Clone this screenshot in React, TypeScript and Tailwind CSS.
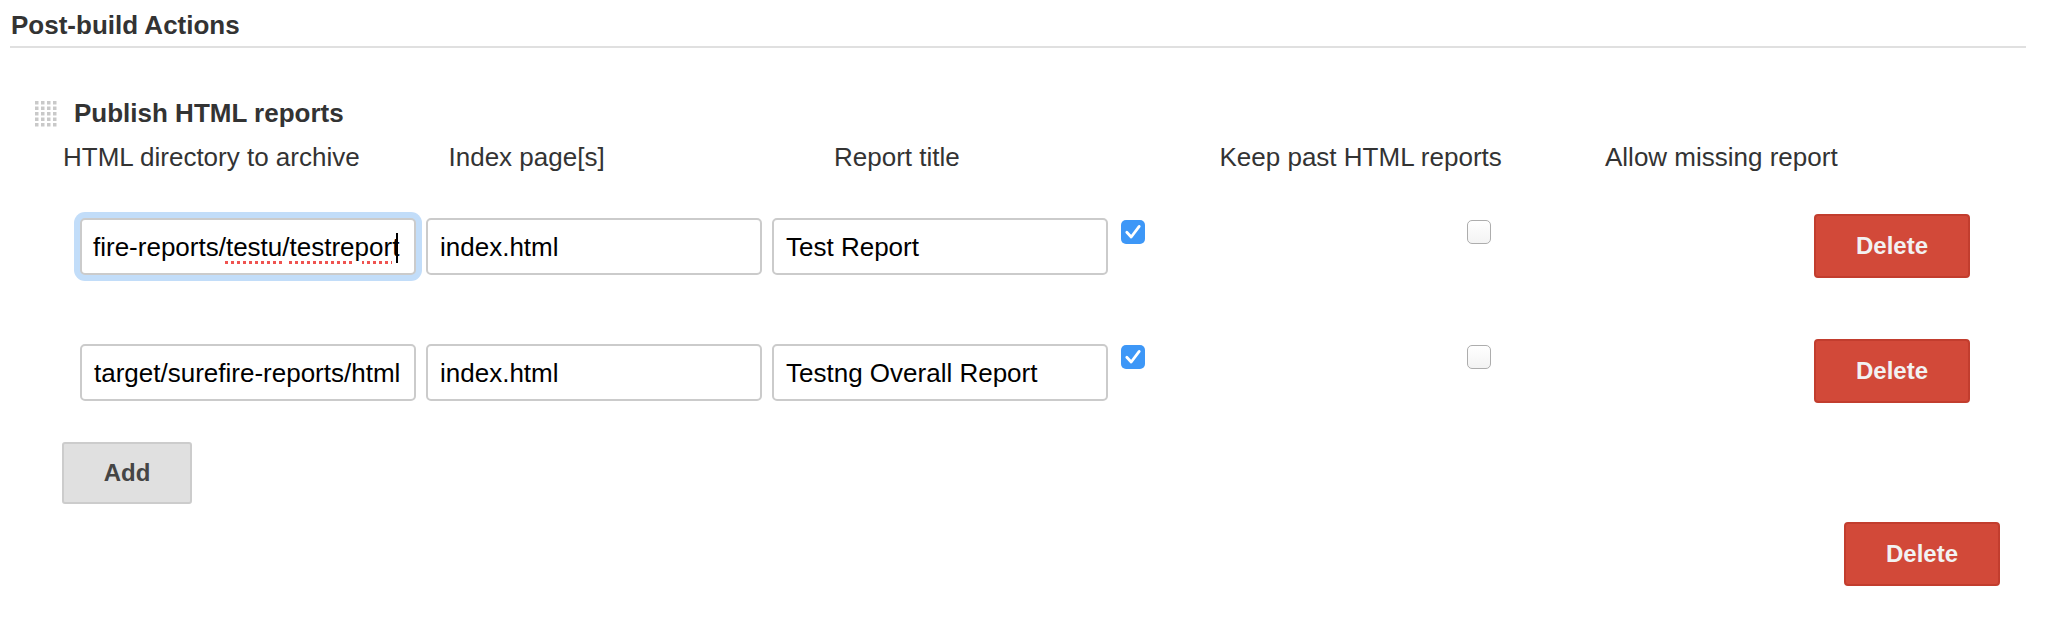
import React from "react";

function Field({ children, focused }: { children: React.ReactNode; focused?: boolean }) {
  return (
    <div
      className={
        focused
          ? "flex h-[57px] w-[336px] items-center overflow-hidden whitespace-nowrap rounded-[5px] border-2 border-[#cbcbcb] bg-white pl-[11px] pt-[2px] text-[26px] text-black shadow-[0_0_0_6px_#c2ddf9]"
          : "flex h-[57px] w-[336px] items-center overflow-hidden whitespace-nowrap rounded-[5px] border-2 border-[#cbcbcb] bg-white pl-[12px] pt-[2px] text-[26px] text-black"
      }
    >
      {children}
    </div>
  );
}

function Checked() {
  return (
    <svg width="24" height="24" viewBox="0 0 24 24" className="mt-[6px] ml-[13px] shrink-0">
      <rect x="0" y="0" width="24" height="24" rx="5" fill="#3d97f7" />
      <path d="M5.8 12.2 L10.2 17 L18.2 6.4" fill="none" stroke="#fff" strokeWidth="2.8" strokeLinecap="round" strokeLinejoin="round" />
    </svg>
  );
}

function Unchecked() {
  return (
    <div className="mt-[6px] ml-[322px] h-[24px] w-[24px] shrink-0 rounded-[5px] border-[1.5px] border-[#adadad] bg-gradient-to-b from-white to-[#f3f3f3]" />
  );
}

function DeleteButton() {
  return (
    <button className="flex h-[64px] w-[156px] shrink-0 items-center justify-center rounded-[4px] border-2 border-[#c23d2e] bg-[#d24939] text-[24px] font-bold text-[#f2f2f2]">
      Delete
    </button>
  );
}

function Grip() {
  const cols = [1, 7, 13, 19];
  const rows = [1, 6.5, 12, 17.5, 23];
  return (
    <svg width="23" height="28" viewBox="0 0 23 28" className="mt-[2px] shrink-0">
      {rows.map((y) =>
        cols.map((x) => <rect key={`${x}-${y}`} x={x} y={y} width="3.5" height="3.5" fill="#c9c9c9" />)
      )}
    </svg>
  );
}

const headers = [
  "HTML directory to archive",
  "Index page[s]",
  "Report title",
  "Keep past HTML reports",
  "Allow missing report",
];

export default function App() {
  return (
    <div className="min-h-screen bg-white font-['Liberation_Sans',Arial,sans-serif] text-[#333]">
      <div className="pl-[11px] pt-[10px] text-[26px] font-bold leading-[30px]">Post-build Actions</div>
      <div className="ml-[10px] mr-[20px] mt-[6px] h-[2px] bg-[#e0e0e0]" />

      <div className="mt-[50px] flex items-start gap-[17px] pl-[34px]">
        <Grip />
        <div className="text-[26px] font-bold leading-[30px]">Publish HTML reports</div>
      </div>

      <div className="mt-[14px] flex pl-[63px] text-[26px] leading-[30px]">
        {headers.map((h) => (
          <div key={h} className="w-[385.5px] shrink-0 whitespace-nowrap">
            {h}
          </div>
        ))}
      </div>

      <div className="mt-[42px] flex items-start pl-[80px]">
        <div className="mt-[4px] flex gap-[10px]">
          <Field focused>
            fire-reports/
            <span className="underline decoration-[#ef5350] decoration-dotted decoration-[3px] underline-offset-[5px]">testu</span>
            /
            <span className="underline decoration-[#ef5350] decoration-dotted decoration-[3px] underline-offset-[5px]">testrepor</span>
            t
            <span className="-ml-[3px] inline-block h-[30px] w-[2px] bg-black" />
          </Field>
          <Field>index.html</Field>
          <Field>Test Report</Field>
        </div>
        <Checked />
        <Unchecked />
        <div className="ml-[323px]">
          <DeleteButton />
        </div>
      </div>

      <div className="mt-[61px] flex items-start pl-[80px]">
        <div className="mt-[5px] flex gap-[10px]">
          <Field>target/surefire-reports/html</Field>
          <Field>index.html</Field>
          <Field>Testng Overall Report</Field>
        </div>
        <Checked />
        <Unchecked />
        <div className="ml-[323px]">
          <DeleteButton />
        </div>
      </div>

      <div className="mt-[39px] pl-[62px]">
        <button className="flex h-[62px] w-[130px] items-center justify-center rounded-[3px] border-2 border-[#cccccc] bg-[#e0e0e0] text-[24px] font-bold text-[#454545]">
          Add
        </button>
      </div>

      <div className="mt-[18px] flex justify-end pr-[46px]">
        <DeleteButton />
      </div>
    </div>
  );
}
